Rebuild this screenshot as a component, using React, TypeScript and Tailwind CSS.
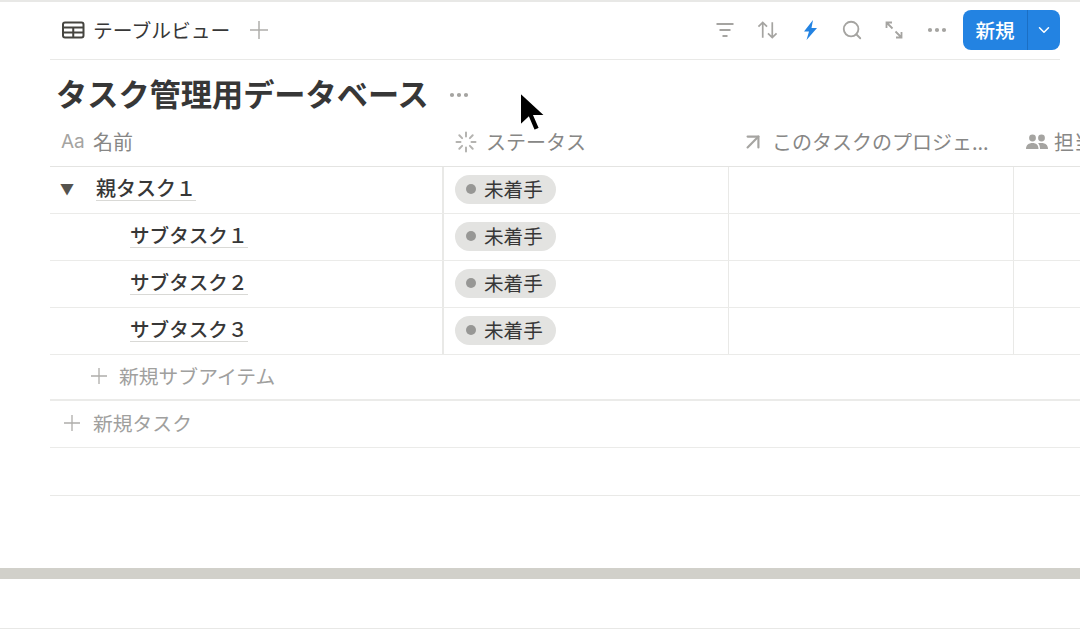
import { ArrowUpRight, ChevronDown, Search, MoreHorizontal } from 'lucide-react'

const rows = [
  { name: 'サブタスク１' },
  { name: 'サブタスク２' },
  { name: 'サブタスク３' },
]

function StatusPill() {
  return (
    <div className="flex items-center h-[29px] w-[101px] rounded-full bg-[#e3e3e1] pl-[11px] gap-[8px] text-[19.6px] text-[#373737]">
      <span className="w-[10px] h-[10px] rounded-full bg-[#979795]" />
      <span className="leading-none pb-[1px]">未着手</span>
    </div>
  )
}

function PlusIcon({ size, color }: { size: number; color: string }) {
  return (
    <svg width={size} height={size} viewBox="0 0 16 16" fill="none" stroke={color} strokeWidth="1.300">
      <path d="M8 0v16M0 8h16" />
    </svg>
  )
}

function TableIcon() {
  return (
    <svg width="23" height="18" viewBox="0 0 23 18" fill="none" stroke="#45443f" strokeWidth="2">
      <rect x="1" y="1.500" width="20.500" height="15" rx="2" />
      <path d="M1 6.500h20.500M1 11.500h20.500M11.250 6.500v10" />
    </svg>
  )
}

function FilterIcon() {
  return (
    <svg width="20" height="18" viewBox="0 0 20 18" fill="none" stroke="#a5a4a1" strokeWidth="2">
      <path d="M1.500 3h17M4.500 9h11M7.500 15h5" />
    </svg>
  )
}

function SortIcon() {
  return (
    <svg width="21" height="20" viewBox="0 0 22 20" fill="none" stroke="#a5a4a1" strokeWidth="1.800">
      <path d="M6 18V2M1.500 6.500 6 2l4.500 4.500M16 2v16M11.500 13.500 16 18l4.500-4.500" />
    </svg>
  )
}

function BoltIcon() {
  return (
    <svg width="15" height="20" viewBox="0 0 15 20" fill="#2383e2">
      <path d="M10 0 1 11.500h5L3.500 20 14 8H8.500L10 0Z" />
    </svg>
  )
}

function ExpandIcon() {
  return (
    <svg width="18" height="18" viewBox="0 0 18 18" fill="none" stroke="#a5a4a1" strokeWidth="1.800">
      <path d="M1.500 7V1.500H7M2 2l5.500 5.500M16.500 11v5.500H11M16 16l-5.500-5.500" />
    </svg>
  )
}

function StatusIcon() {
  return (
    <svg width="22" height="22" viewBox="0 0 22 22" fill="none" stroke="#b4b3b0" strokeWidth="2" strokeLinecap="round">
      <path d="M11 1.500v4M11 16.500v4M1.500 11h4M16.500 11h4M4.300 4.300l2.800 2.800M14.900 14.900l2.800 2.800M4.300 17.700l2.800-2.800M14.900 7.100l2.800-2.800" />
    </svg>
  )
}

function PeopleIcon() {
  return (
    <svg width="22" height="16" viewBox="0 0 22 16" fill="#a5a4a1">
      <circle cx="6.500" cy="4" r="3.400" />
      <circle cx="15.500" cy="4" r="3.400" />
      <path d="M0 15c0-4 2.800-6 6.500-6s6 2 6 6ZM14 15c0-2.500-.7-4.500-2-5.700 1-.3 2.200-.3 3.500-.3 3.700 0 6.500 2 6.500 6Z" />
    </svg>
  )
}

function Cursor() {
  return (
    <svg className="absolute left-[515px] top-[87px]" width="32" height="46" viewBox="0 0 32 46">
      <path d="M5 3v34l8.500-8 5.500 13 6-2.500-5.500-12.500h11.500Z" fill="#000" stroke="#fff" strokeWidth="2" />
    </svg>
  )
}

export default function App() {
  return (
    <div
      className="relative w-[1080px] h-[629px] overflow-hidden bg-white text-[#373737] border-t-2 border-b border-[#e8e8e6]"
      style={{ fontFamily: '"Noto Sans CJK JP", "Noto Sans", sans-serif' }}
    >
      <div className="ml-[50px] w-[1010px]">
        <div className="flex items-center h-[58px] pb-[1px] border-b border-[#e9e9e7]">
          <div className="ml-[12px]"><TableIcon /></div>
          <span className="ml-[8px] text-[19.800px]">テーブルビュー</span>
          <div className="ml-[20px]"><PlusIcon size={18} color="#aeadaa" /></div>
          <div className="ml-auto flex items-center">
            <FilterIcon />
            <div className="ml-[22px]"><SortIcon /></div>
            <div className="ml-[25px]"><BoltIcon /></div>
            <Search className="ml-[23px] text-[#a5a4a1]" size={22} strokeWidth={2} />
            <div className="ml-[22px]"><ExpandIcon /></div>
            <MoreHorizontal className="ml-[22px] text-[#a5a4a1]" size={24} strokeWidth={2.200} />
            <div className="ml-[14px] flex items-center h-[40px] w-[97px] rounded-[8px] bg-[#2383e2] text-white">
              <span className="w-[64px] text-center text-[19.6px] font-medium">新規</span>
              <div className="flex-1 h-full flex items-center justify-center border-l border-[#1b6fc4]">
                <ChevronDown size={18} strokeWidth={2} />
              </div>
            </div>
          </div>
        </div>

        <div className="flex items-center h-[72px] pl-[6px] pb-[6px]">
          <h1 className="text-[31.200px] font-bold leading-none">タスク管理用データベース</h1>
          <MoreHorizontal className="ml-[18px] mt-[4px] text-[#a5a4a1]" size={24} strokeWidth={2.200} />
        </div>

        <div className="w-[1100px]">
          <div className="flex h-[35px] pb-[14px] items-center text-[20px] text-[#878786] border-b border-[#e4e4e2]">
            <div className="flex items-center w-[394px] pl-[11px]">
              <span className="text-[19px] text-[#a5a4a1] w-[32px]" style={{ fontFamily: '"Inter", sans-serif' }}>Aa</span>
              <span>名前</span>
            </div>
            <div className="flex items-center w-[285px] pl-[11px] gap-[9px]">
              <StatusIcon />
              <span>ステータス</span>
            </div>
            <div className="flex items-center w-[285px] pl-[11px] gap-[6px]">
              <ArrowUpRight className="text-[#a5a4a1]" size={26} strokeWidth={2} />
              <span>このタスクのプロジェ...</span>
            </div>
            <div className="flex items-center pl-[12px] gap-[6px]">
              <PeopleIcon />
              <span>担当</span>
            </div>
          </div>

          <div className="flex h-[47px] border-b border-[#ebebe9]">
            <div className="flex items-center w-[394px] pb-[3px] border-r-2 border-[#e9e9e7]">
              <span className="ml-[10px] w-[36px] text-[14px] text-[#55534e]">▼</span>
              <span className="text-[20px] leading-[24px] font-medium border-b border-[#d9d9d6]">親タスク１</span>
            </div>
            <div className="flex items-center w-[285px] pl-[11px] pb-[2px] border-r border-[#e9e9e7]"><StatusPill /></div>
            <div className="w-[285px] border-r border-[#e9e9e7]" />
          </div>

          {rows.map((r) => (
            <div key={r.name} className="flex h-[47px] border-b border-[#ebebe9]">
              <div className="flex items-center w-[394px] pl-[80px] pb-[3px] border-r-2 border-[#e9e9e7]">
                <span className="text-[19.6px] leading-[24px] font-medium border-b border-[#d9d9d6]">{r.name}</span>
              </div>
              <div className="flex items-center w-[285px] pl-[11px] pb-[2px] border-r border-[#e9e9e7]"><StatusPill /></div>
              <div className="w-[285px] border-r border-[#e9e9e7]" />
            </div>
          ))}

          <div className="flex items-center h-[46px] pl-[41px] pb-[2px] border-b-2 border-[#ebebe9] text-[19.800px] text-[#a0a09e]">
            <PlusIcon size={16} color="#aeadaa" />
            <span className="ml-[12px]">新規サブアイテム</span>
          </div>
          <div className="flex items-center h-[47px] pl-[14px] pb-[2px] border-b border-[#ebebe9] text-[19.800px] text-[#a0a09e]">
            <PlusIcon size={16} color="#aeadaa" />
            <span className="ml-[13px]">新規タスク</span>
          </div>
          <div className="h-[48px] border-b border-[#e9e9e7]" />
        </div>
      </div>

      <div className="mt-[72px] h-[11px] bg-[#d1d0ca]" />

      <Cursor />
    </div>
  )
}
